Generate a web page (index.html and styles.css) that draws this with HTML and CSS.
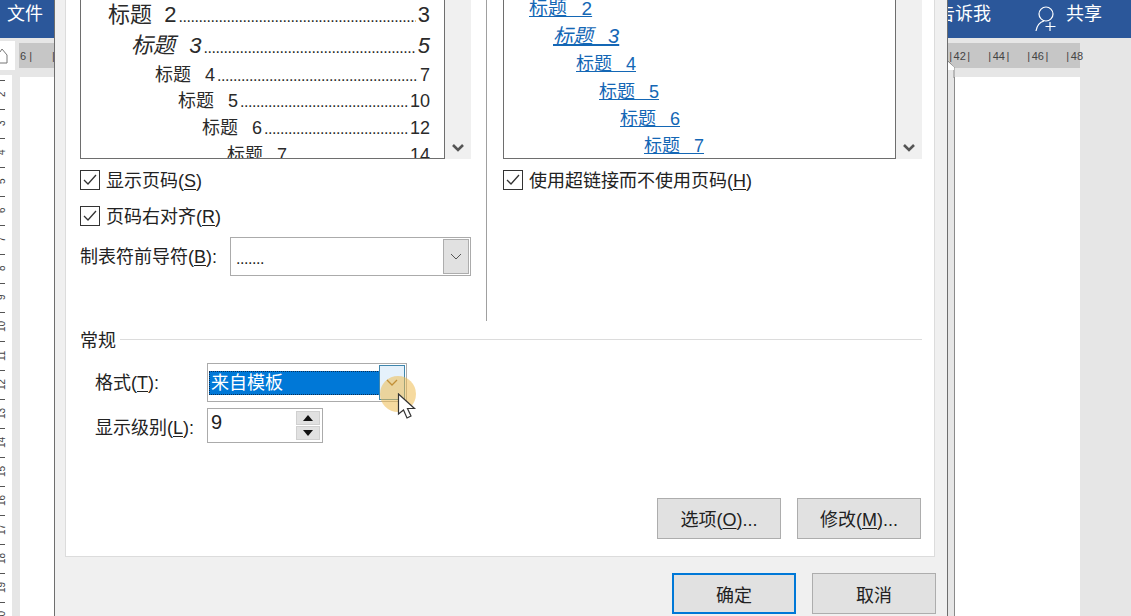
FILE: index.html
```html
<!DOCTYPE html>
<html lang="zh">
<head>
<meta charset="utf-8">
<title>目录</title>
<link rel="stylesheet" href="styles.css">
</head>
<body>
<div class="app">
  <header class="titlebar">
    <span class="file">文件</span>
    <span class="tell">告诉我</span>
    <svg class="person" width="24" height="28" viewBox="0 0 24 28"><circle cx="11" cy="10" r="7" fill="none" stroke="#fff" stroke-width="1.2"/><path d="M1 27c1-6 4-9 8-10M15 18v9M10.500 22.500h10" fill="none" stroke="#fff" stroke-width="1.2"/></svg>
    <span class="share">共享</span>
  </header>
  <div class="ruler-row">
    <div class="corner"><svg width="12" height="16" viewBox="0 0 12 16"><path d="M0 4l2-3 5 6v8H0" fill="#fff" stroke="#777"/></svg></div>
    <div class="band">
      <span class="tick-group"><span>6 |</span><span>|</span></span>
      <span class="tick-group right"><span>| 42 |</span><span>| 44 |</span><span>| 46 |</span><span>| 48</span></span>
    </div>
  </div>
  <div class="doc-area">
    <div class="vruler">
      <span>2</span><span>3</span><span>4</span><span>5</span><span>6</span><span>7</span><span>8</span><span>9</span><span>10</span><span>11</span><span>12</span><span>13</span><span>14</span><span>15</span><span>16</span><span>17</span><span>18</span><span>19</span><span>20</span>
    </div>
    <div class="page page-left"></div>
    <div class="page page-right"></div>
  </div>

  <section class="dialog">
    <div class="panel">
      <div class="columns">
        <div class="col col-left">
          <div class="preview-wrap">
            <div class="preview">
              <div class="toc h2"><span>标题  2</span><span class="dots">....................................................................................</span><span>3</span></div>
              <div class="toc h3"><span>标题  3</span><span class="dots">....................................................................................</span><span>5</span></div>
              <div class="toc h4"><span>标题  4</span><span class="dots">....................................................................................</span><span>7</span></div>
              <div class="toc h5"><span>标题  5</span><span class="dots">....................................................................................</span><span>10</span></div>
              <div class="toc h6"><span>标题  6</span><span class="dots">....................................................................................</span><span>12</span></div>
              <div class="toc h7"><span>标题  7</span><span class="dots">....................................................................................</span><span>14</span></div>
            </div>
            <div class="scroll"><svg width="14" height="10" viewBox="0 0 14 10"><path d="M2 2l5 5 5-5" fill="none" stroke="#555" stroke-width="2.600"/></svg></div>
          </div>
          <label class="check first"><span class="box"><svg width="14" height="12" viewBox="0 0 14 12"><path d="M1 6l4 4 8-9" fill="none" stroke="#333" stroke-width="1.300"/></svg></span><span class="check-text">显示页码(<u>S</u>)</span></label>
          <label class="check"><span class="box"><svg width="14" height="12" viewBox="0 0 14 12"><path d="M1 6l4 4 8-9" fill="none" stroke="#333" stroke-width="1.300"/></svg></span><span class="check-text">页码右对齐(<u>R</u>)</span></label>
          <div class="leader-row">
            <span class="leader-label">制表符前导符(<u>B</u>):</span>
            <div class="select leader-select">
              <span class="leader-value">.......</span>
              <span class="select-btn"><svg width="12" height="8" viewBox="0 0 12 8"><path d="M1 1l5 5 5-5" fill="none" stroke="#555"/></svg></span>
            </div>
          </div>
        </div>
        <div class="divider"></div>
        <div class="col col-right">
          <div class="preview-wrap">
            <div class="preview web">
              <div class="link l2"><a>标题  2</a></div>
              <div class="link l3"><a>标题  3</a></div>
              <div class="link l4"><a>标题  4</a></div>
              <div class="link l5"><a>标题  5</a></div>
              <div class="link l6"><a>标题  6</a></div>
              <div class="link l7"><a>标题  7</a></div>
            </div>
            <div class="scroll"><svg width="14" height="10" viewBox="0 0 14 10"><path d="M2 2l5 5 5-5" fill="none" stroke="#555" stroke-width="2.600"/></svg></div>
          </div>
          <label class="check first"><span class="box"><svg width="14" height="12" viewBox="0 0 14 12"><path d="M1 6l4 4 8-9" fill="none" stroke="#333" stroke-width="1.300"/></svg></span><span class="check-text">使用超链接而不使用页码(<u>H</u>)</span></label>
        </div>
      </div>

      <div class="group-title"><span>常规</span><i></i></div>
      <div class="form-row format-row">
        <span class="form-label">格式(<u>T</u>):</span>
        <div class="select format-select">
          <span class="selected">来自模板</span>
          <span class="select-btn hot"><svg width="12" height="8" viewBox="0 0 12 8"><path d="M1 1l5 5 5-5" fill="none" stroke="#8a5a1a" stroke-width="1.300"/></svg></span>
        </div>
      </div>
      <div class="form-row level-row">
        <span class="form-label">显示级别(<u>L</u>):</span>
        <div class="spin">
          <span class="spin-value">9</span>
          <span class="spin-btns">
            <span class="spin-btn"><svg width="10" height="6" viewBox="0 0 10 6"><path d="M0 6l5-6 5 6z" fill="#111"/></svg></span>
            <span class="spin-btn"><svg width="10" height="6" viewBox="0 0 10 6"><path d="M0 0l5 6 5-6z" fill="#111"/></svg></span>
          </span>
        </div>
      </div>
      <div class="panel-actions">
        <button class="btn">选项(<u>O</u>)...</button>
        <button class="btn">修改(<u>M</u>)...</button>
      </div>
    </div>
    <div class="dialog-actions">
      <button class="btn primary">确定</button>
      <button class="btn">取消</button>
    </div>
  </section>

  <svg class="indent-marker" width="8" height="18" viewBox="0 0 8 18"><path d="M0 1l6 6v11" fill="none" stroke="#8a8a8a"/><path d="M0 2l6 5v3H0z" fill="#fff"/></svg>
  <div class="pointer-halo"></div>
  <svg class="pointer" width="20" height="30" viewBox="0 0 20 30"><path d="M1.500 1v20l5-4 3.500 8 4-2-3.500-7.500h7z" fill="#fff" stroke="#333" stroke-width="1.200"/></svg>
</div>
</body>
</html>
```
FILE: styles.css
```css
* { box-sizing: border-box; }
html, body { margin: 0; padding: 0; }
body {
  font-family: "Liberation Sans", "Noto Sans CJK SC", sans-serif;
  color: #222;
  background: #e6e6e6;
}
.app {
  position: relative;
  width: 1131px;
  height: 616px;
  overflow: hidden;
  background: #e6e6e6;
  display: flex;
  flex-direction: column;
}

/* Word window behind the dialog */
.titlebar {
  height: 38px;
  background: #2b579a;
  color: #fff;
  display: flex;
  align-items: center;
  font-size: 18px;
  padding: 0 29px 14px 7px;
  flex: none;
}
.tell { margin-left: auto; }
.person { margin-left: 44px; margin-right: 7px; align-self: flex-start; margin-top: 4px; }

.ruler-row {
  height: 39px;
  flex: none;
  display: flex;
  align-items: flex-start;
  padding-top: 3px;
}
.corner {
  width: 15px;
  height: 29px;
  background: #fff;
  display: flex;
  align-items: center;
  overflow: hidden;
  flex: none;
}
.band {
  margin-top: 2px;
  margin-left: 4px;
  width: 1061px;
  height: 25px;
  background: #c6c6c6;
  display: flex;
  align-items: center;
  justify-content: space-between;
  font-size: 11px;
  color: #444;
  white-space: nowrap;
}
.tick-group { display: flex; gap: 20px; padding-left: 1px; }
.tick-group.right { gap: 18px; margin-right: -3px; word-spacing: -1.500px; }

.doc-area { flex: 1; display: flex; min-height: 0; }
.vruler {
  width: 12px;
  flex: none;
  background: #fff;
  display: flex;
  flex-direction: column;
  overflow: hidden;
  padding-top: 5px;
  margin-top: -2px;
}
.vruler span {
  flex: none;
  width: 15px;
  height: 29px;
  margin-left: -3px;
  writing-mode: vertical-rl;
  transform: rotate(180deg);
  font-size: 10px;
  line-height: 10px;
  text-align: center;
  color: #444;
  background: linear-gradient(#555, #555) 100% 100% / 8px 1px no-repeat;
}
.page { background: #fff; flex: none; }
.page-left { width: 40px; margin-left: 8px; }
.page-right { width: 125px; margin-left: auto; margin-right: 51px; box-shadow: -1px 0 0 #8a8a8a; }

/* Dialog */
.dialog {
  position: absolute;
  left: 54px;
  top: 0;
  width: 894px;
  height: 616px;
  background: #f0f0f0;
  border-left: 1px solid #6e6e6e;
  border-right: 1px solid #6e6e6e;
  display: flex;
  flex-direction: column;
}
.panel {
  margin-left: 10px;
  width: 870px;
  height: 557px;
  flex: none;
  background: #fff;
  border: 1px solid #dcdcdc;
  border-top: 0;
  padding: 0 12px 0 14px;
  display: flex;
  flex-direction: column;
}
.columns { display: flex; height: 321px; flex: none; }
.col-left { width: 391px; flex: none; }
.divider { width: 1px; background: #a0a0a0; margin-left: 15px; margin-right: 16px; flex: none; }
.col-right { width: 419px; flex: none; }

.preview-wrap { display: flex; height: 159px; }
.preview {
  flex: 1;
  border: 1px solid #6e6e6e;
  border-top: 0;
  background: #fff;
  overflow: hidden;
}
.scroll {
  width: 26px;
  flex: none;
  background: #f0f0f0;
  display: flex;
  align-items: flex-end;
  justify-content: center;
  padding-bottom: 6px;
}

.toc {
  display: flex;
  align-items: baseline;
  white-space: pre;
  padding-right: 14px;
  color: #2a2a2a;
  font-size: 18px;
  word-spacing: 2px;
}
.dots { flex: 1; min-width: 0; overflow: hidden; font-size: 16px; font-style: normal; letter-spacing: -.448px; margin: 0 2px; }
.h2 { font-size: 22px; line-height: 29px; height: 29px; padding-left: 27px; word-spacing: 0; }
.h3 { font-size: 22px; line-height: 34px; height: 34px; padding-left: 50px; font-style: italic; word-spacing: 1px; }
.h4 { line-height: 25px; height: 25px; padding-left: 74px; }
.h5 { line-height: 27px; height: 27px; padding-left: 97px; }
.h6 { line-height: 27px; height: 27px; padding-left: 121px; }
.h7 { line-height: 27px; height: 27px; padding-left: 146px; }

.web { padding-top: 0; }
.link { font-size: 18px; white-space: pre; word-spacing: 2px; color: #1467b5; height: 27px; line-height: 27px; }
.link a { text-decoration: underline; text-underline-offset: 1px; }
.l2 { font-size: 19px; height: 27px; line-height: 27px; padding-left: 25px; margin-top: -5px; }
.l3 { font-size: 20px; height: 28px; line-height: 28px; padding-left: 49px; font-style: italic; }
.l4 { height: 29px; line-height: 29px; padding-left: 72px; }
.l5 { padding-left: 95px; }
.l6 { padding-left: 116px; }
.l7 { padding-left: 140px; }

.check {
  display: flex;
  align-items: center;
  font-size: 18px;
  height: 20px;
  margin-top: 16px;
}
.check.first { margin-top: 11px; }
.check-text { padding-bottom: 2px; }
.box {
  width: 20px;
  height: 20px;
  border: 1px solid #333;
  background: #fff;
  margin-right: 6px;
  display: flex;
  align-items: center;
  justify-content: center;
  flex: none;
}
u { text-underline-offset: 2px; }

.leader-row { display: flex; align-items: center; margin-top: 11px; }
.leader-label { font-size: 18px; width: 150px; flex: none; padding-bottom: 4px; }
.select { border: 1px solid #ababab; background: #fff; display: flex; align-items: stretch; }
.leader-select { width: 241px; height: 39px; padding: 1px; }
.leader-value { flex: 1; font-size: 16px; line-height: 40px; padding-left: 4px; letter-spacing: -.448px; }
.select-btn {
  width: 26px;
  flex: none;
  background: #e1e1e1;
  border: 1px solid #adadad;
  display: flex;
  align-items: center;
  justify-content: center;
}
.group-title { display: flex; align-items: center; font-size: 18px; margin-top: 7px; height: 24px; }
.group-title span { padding-bottom: 2px; }
.group-title i { flex: 1; height: 1px; background: #dcdcdc; margin-left: 4px; position: relative; top: -1px; }

.form-row { display: flex; align-items: center; padding-left: 15px; }
.form-label { font-size: 18px; width: 112px; flex: none; }
.format-row { margin-top: 11px; }
.format-row .form-label { padding-bottom: 4px; }
.format-select { width: 200px; height: 39px; padding: 1px; align-items: stretch; }
.selected {
  flex: 1;
  margin: 6px 0 5px;
  background: #0078d7;
  color: #fff;
  font-size: 18px;
  line-height: 25px;
  padding-left: 2px;
  outline: 1px dotted #0a2f55;
  outline-offset: -1px;
}
.select-btn.hot { background: #e5f1fb; border-color: #3f86ad; margin-left: -1px; }
.level-row { margin-top: 6px; }
.spin {
  width: 116px;
  height: 35px;
  border: 1px solid #ababab;
  background: #fff;
  display: flex;
  padding: 2px;
}
.spin-value { flex: 1; font-size: 20px; line-height: 22px; padding-left: 1px; }
.spin-btns { width: 24px; flex: none; display: flex; flex-direction: column; gap: 1px; }
.spin-btn {
  flex: 1;
  background: #e1e1e1;
  border: 1px solid #d0d0d0;
  display: flex;
  align-items: center;
  justify-content: center;
}
.panel-actions { display: flex; justify-content: flex-end; gap: 16px; margin-top: 55px; padding-right: 1px; }
.panel-actions .btn { padding-bottom: 2px; }
.btn {
  width: 124px;
  height: 41px;
  background: #e1e1e1;
  border: 1px solid #adadad;
  font: inherit;
  font-size: 18px;
  color: #222;
  padding: 0;
}
.dialog-actions { display: flex; justify-content: flex-end; gap: 16px; margin-top: 16px; padding-right: 11px; }
.btn.primary { border: 2px solid #0078d7; }

/* Ruler marker and recorded pointer, both on top of the windows */
.indent-marker { position: absolute; left: 948px; top: 60px; }
.pointer-halo {
  position: absolute;
  left: 380px;
  top: 376px;
  width: 36px;
  height: 36px;
  border-radius: 50%;
  background: rgba(238, 188, 80, .55);
}
.pointer { position: absolute; left: 397px; top: 393px; }
```
